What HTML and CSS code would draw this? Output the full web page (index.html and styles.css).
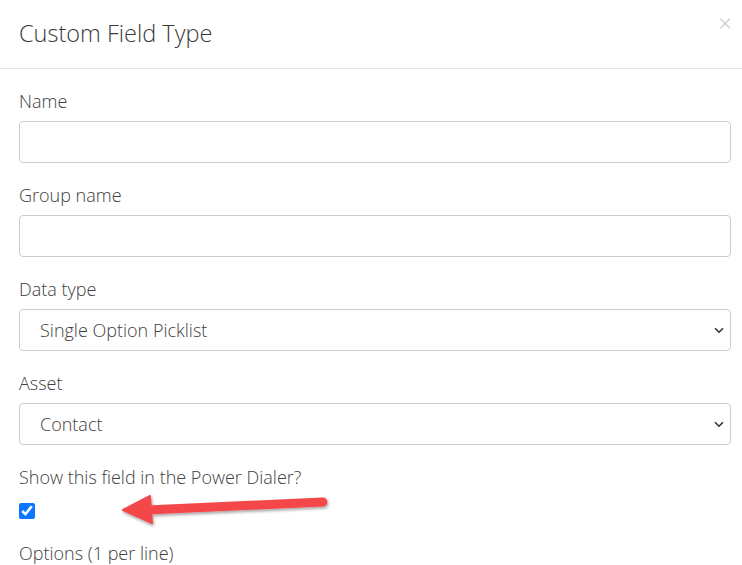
FILE: index.html
```html
<!DOCTYPE html>
<html>
<head>
<meta charset="utf-8">
<link rel="stylesheet" href="styles.css">
</head>
<body>
<div class="modal">
  <div class="modal-header">
    <h4 class="modal-title">Custom Field Type</h4>
    <span class="close">&times;</span>
  </div>
  <div class="modal-body">
    <div class="group">
      <label class="label">Name</label>
      <input class="control" type="text">
    </div>
    <div class="group">
      <label class="label">Group name</label>
      <input class="control" type="text">
    </div>
    <div class="group">
      <label class="label">Data type</label>
      <div class="select-wrap">
        <select class="control select"><option>Single Option Picklist</option></select>
        <svg class="chev" width="10" height="7" viewBox="0 0 10 7"><path d="M1 1.2 L5 5.2 L9 1.2" fill="none" stroke="#333" stroke-width="1.6"/></svg>
      </div>
    </div>
    <div class="group">
      <label class="label">Asset</label>
      <div class="select-wrap">
        <select class="control select"><option>Contact</option></select>
        <svg class="chev" width="10" height="7" viewBox="0 0 10 7"><path d="M1 1.2 L5 5.2 L9 1.2" fill="none" stroke="#333" stroke-width="1.6"/></svg>
      </div>
    </div>
    <div class="group check-group">
      <label class="label">Show this field in the Power Dialer?</label>
      <div class="check-row">
        <input class="check" type="checkbox" checked>
        <svg class="arrow" width="240" height="50" viewBox="0 0 240 50">
          <defs>
            <filter id="sh" x="-10%" y="-50%" width="120%" height="200%">
              <feDropShadow dx="1" dy="2" stdDeviation="1.5" flood-color="#000" flood-opacity="0.35"/>
            </filter>
          </defs>
          <g filter="url(#sh)" fill="#f4474a" stroke="#f4474a">
            <line x1="38" y1="25" x2="214" y2="17" stroke-width="9" stroke-linecap="round"/>
            <polygon points="14,25 41,11 43,38" stroke-width="2" stroke-linejoin="round"/>
          </g>
        </svg>
      </div>
    </div>
    <div class="group last">
      <label class="label">Options (1 per line)</label>
    </div>
  </div>
</div>
</body>
</html>
```
FILE: styles.css
```css
* { box-sizing: border-box; }
html, body { margin: 0; padding: 0; background: #fff; }
body {
  font-family: "Open Sans", "Noto Sans", sans-serif;
  color: #404040;
  font-size: 18px;
  font-weight: 360;
}
.modal { width: 742px; }
.modal-header {
  position: relative;
  height: 69px;
  padding: 16px 19px 0;
  border-bottom: 1px solid #e5e5e5;
}
.modal-title {
  margin: 0;
  font-size: 23.5px;
  font-weight: 350;
  line-height: 34px;
  color: #3a3a3a;
}
.close {
  position: absolute;
  right: 10px;
  top: 8px;
  font-size: 24px;
  line-height: 30px;
  color: #c8c8c8;
}
.modal-body { padding: 20px 11px 0 19px; }
.group { margin-bottom: 20px; display: flex; flex-direction: column; align-items: flex-start; }
.group.last { margin-bottom: 0; }
.group.last .label { margin-bottom: 0; line-height: 22px; }
.label {
  display: block;
  line-height: 24px;
  margin-bottom: 8px;
  font-size: 18px;
}
.control {
  width: 712px;
  height: 42px;
  border: 1px solid #ccc;
  border-radius: 4px;
  background: #fff;
  font-family: inherit;
  font-weight: inherit;
  font-size: 18px;
  color: #404040;
  padding: 0 20px;
  outline: none;
}
.select-wrap { position: relative; }
.select { appearance: none; -webkit-appearance: none; }
.chev { position: absolute; right: 7px; top: 18px; }
.check-group { margin-bottom: 25px; }
.check-row { position: relative; margin-top: 3px; height: 17px; }
.check {
  margin: 0;
  width: 16px;
  height: 16px;
  accent-color: #0b76ff;
}
.arrow { position: absolute; left: 90px; top: -15px; }
```
